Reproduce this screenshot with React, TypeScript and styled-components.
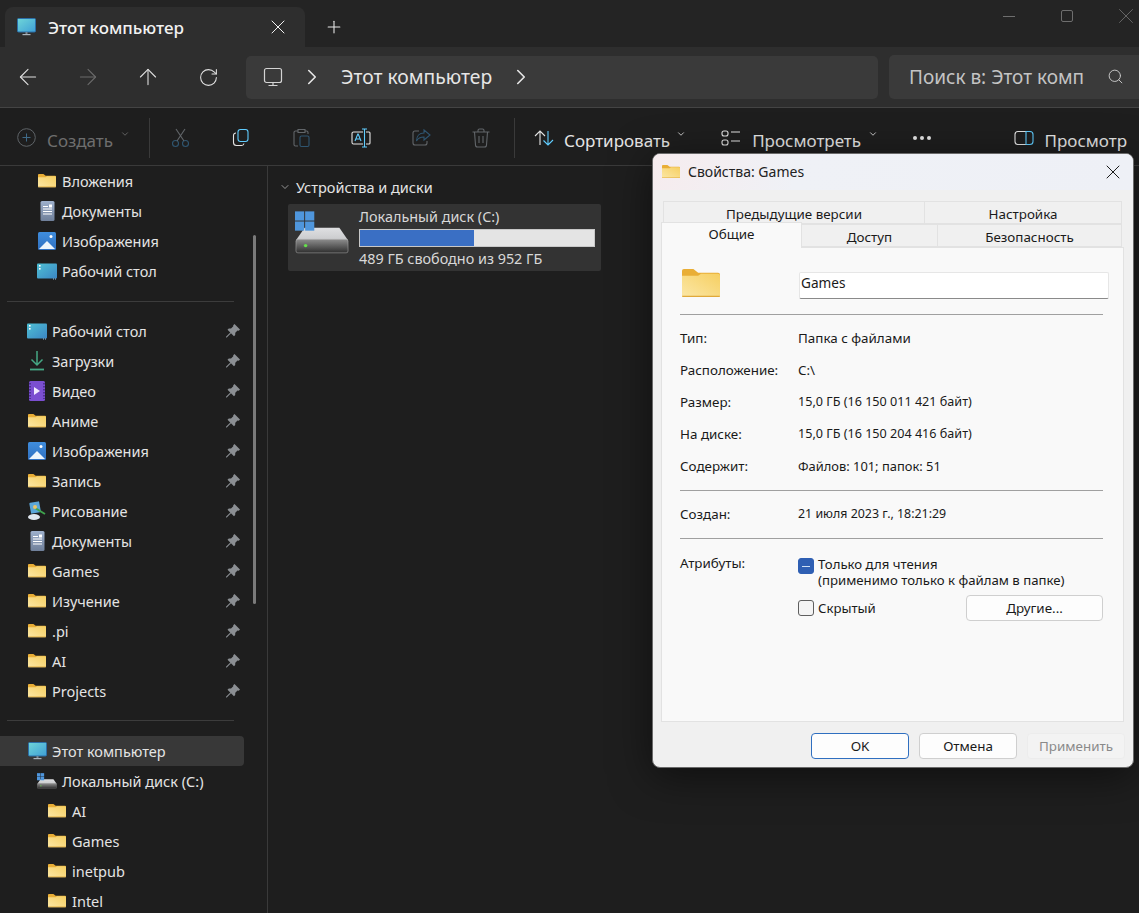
import * as React from 'react'
import styled, {createGlobalStyle} from 'styled-components'
import {ArrowLeft, ArrowRight, ArrowUp, ChevronDown, ChevronRight, Plus, RotateCw, Search, X} from 'lucide-react'

const UI_FONT = `"Noto Sans", "Open Sans", sans-serif`

const Global = createGlobalStyle`
  html, body { margin: 0; padding: 0; background: #1e1e1e; }
  body { font-family: ${UI_FONT}; overflow: hidden; }
  * { box-sizing: border-box; }
  svg { display: block; flex: none; }
`

const Page = styled.div`
  position: relative;
  width: 1139px;
  height: 913px;
  overflow: hidden;
  display: flex;
  flex-direction: column;
  background: #1e1e1e;
  color: #e8e8e8;
`

/* ---------- drawings ---------- */

const Folder: React.FC<{size?: number}> = ({size = 18}) => (
    <svg width={size} height={size * 0.74} viewBox="0 0 20 15.2" preserveAspectRatio="none">
        <defs>
            <linearGradient id="fg" x1="0" y1="1" x2="1" y2="0">
                <stop offset="0" stopColor="#fbe7a6" />
                <stop offset="1" stopColor="#f6cf62" />
            </linearGradient>
        </defs>
        <path d="M0 1a1 1 0 0 1 1-1h5l2.5 2H19a1 1 0 0 1 1 1v2H0z" fill="#e9ae36" />
        <path d="M0 3.6h8.5L10 2.6h9a1 1 0 0 1 1 1V14.2a1 1 0 0 1-1 1H1a1 1 0 0 1-1-1z" fill="url(#fg)" />
        <path d="M0 14.4h20a.8.8 0 0 1-.8.8H.8a.8.8 0 0 1-.8-.8z" fill="#e0a93a" />
    </svg>
)

const MonitorColor: React.FC = () => (
    <svg width="19" height="18" viewBox="0 0 19 18">
        <defs>
            <linearGradient id="mon" x1="0" y1="0" x2="1" y2="1">
                <stop offset="0" stopColor="#6fd6d8" />
                <stop offset="1" stopColor="#3f9fd6" />
            </linearGradient>
        </defs>
        <rect x="0.5" y="0.5" width="18" height="13.5" rx="1" fill="url(#mon)" stroke="#2b6ea8" />
        <rect x="8.5" y="14" width="2" height="2" fill="#7a8794" />
        <rect x="5.5" y="16" width="8" height="1.2" fill="#aab4bd" />
    </svg>
)

const Desktop: React.FC = () => (
    <svg width="20" height="17" viewBox="0 0 20 17">
        <defs>
            <linearGradient id="desk" x1="0" y1="0" x2="1" y2="1">
                <stop offset="0" stopColor="#4fc0d4" />
                <stop offset="1" stopColor="#3b86c4" />
            </linearGradient>
        </defs>
        <rect y="0.5" width="20" height="15" rx="1" fill="url(#desk)" />
        <rect x="2" y="2" width="1.6" height="1.6" fill="#fff" />
        <rect x="2" y="5" width="1.6" height="1.6" fill="#fff" />
        <rect x="16" y="15.5" width="1" height="1" fill="#9ec6e0" />
        <rect x="18" y="15.5" width="1" height="1" fill="#9ec6e0" />
    </svg>
)

const Doc: React.FC = () => (
    <svg width="15" height="20" viewBox="0 0 15 20">
        <defs>
            <linearGradient id="doc" x1="0" y1="0" x2="0" y2="1">
                <stop offset="0" stopColor="#9eb0cc" />
                <stop offset="1" stopColor="#6f7f99" />
            </linearGradient>
        </defs>
        <rect width="14" height="20" x="0.5" rx="1.5" fill="url(#doc)" />
        <path d="M3 5.5h5M3 8h9M3 10.5h9M3 13h9" stroke="#fff" strokeWidth="1" />
        <rect x="9" y="3.5" width="3" height="3" fill="#fff" />
    </svg>
)

const Picture: React.FC = () => (
    <svg width="18" height="18" viewBox="0 0 18 18">
        <defs>
            <linearGradient id="pic" x1="0" y1="0" x2="0" y2="1">
                <stop offset="0" stopColor="#3f8ddc" />
                <stop offset="1" stopColor="#2f6fc0" />
            </linearGradient>
        </defs>
        <rect width="18" height="18" rx="1.5" fill="url(#pic)" />
        <path d="M1 17 9 9l8 8z" fill="#eef5fb" />
        <circle cx="13" cy="4.5" r="1.5" fill="#fff" />
    </svg>
)

const Download: React.FC = () => (
    <svg width="16" height="20" viewBox="0 0 16 20" fill="none" stroke="#45a884" strokeWidth="1.5">
        <path d="M8 0v14M2.5 8.5 8 14l5.5-5.5" />
        <path d="M1 18.5h14" strokeWidth="1.8" />
    </svg>
)

const Video: React.FC = () => (
    <svg width="16" height="20" viewBox="0 0 16 20">
        <rect width="16" height="20" rx="1.5" fill="#7b4fd0" />
        <path d="M1 2v16M15 2v16" stroke="#3c2378" strokeWidth="1.4" strokeDasharray="1.5 1.5" />
        <path d="M5 6v8l6-4z" fill="#f2ecff" />
    </svg>
)

const Paint: React.FC = () => (
    <svg width="20" height="20" viewBox="0 0 20 20">
        <rect x="3" y="1" width="10" height="11" rx="1" fill="#5aa6d8" transform="rotate(-10 8 6)" />
        <ellipse cx="7" cy="16" rx="6" ry="3" fill="#dfe7ef" />
        <path d="M8 7l10 6" stroke="#3fa34d" strokeWidth="2" />
        <circle cx="8" cy="6" r="2" fill="#e9c46a" />
    </svg>
)

const Drive: React.FC<{width: number}> = ({width}) => (
    <svg width={width} height={width * 0.8} viewBox="0 0 56 44">
        <defs>
            <linearGradient id="dtop" x1="0" y1="0" x2="0" y2="1">
                <stop offset="0" stopColor="#dfe0e2" />
                <stop offset="1" stopColor="#c9cacc" />
            </linearGradient>
            <linearGradient id="dfront" x1="0" y1="0" x2="0" y2="1">
                <stop offset="0" stopColor="#8d8d8d" />
                <stop offset="1" stopColor="#2e2e2e" />
            </linearGradient>
        </defs>
        <path d="M10 17h36l9 13H1z" fill="url(#dtop)" />
        <rect x="1" y="29" width="54" height="14" rx="2" fill="url(#dfront)" stroke="#bbb" strokeWidth="0.5" />
        <circle cx="11" cy="35.5" r="1.8" fill="#64e04a" />
        <g fill="#4f96dc">
            <rect x="0" y="0" width="9.5" height="9.5" />
            <rect x="10.5" y="0" width="9.5" height="9.5" />
            <rect x="0" y="10.5" width="9.5" height="9.5" />
            <rect x="10.5" y="10.5" width="9.5" height="9.5" />
        </g>
    </svg>
)

const Pin: React.FC = () => (
    <svg width="14" height="14" viewBox="0 0 14 14">
        <path d="M8.5 0 14 5.500 12.800 6.700 11.500 6.500 9.300 8.800 9.200 11 8 12.300 5 9.300.8 13.500 0 13.500 0 12.800 4.300 8.500 1.500 5.800 2.800 4.600 5 4.500 7.300 2.300 7.200 1.200z" fill="#8b8f93" />
    </svg>
)

const ToolIcon: React.FC<{children: React.ReactNode}> = ({children}) => (
    <svg width="20" height="20" viewBox="0 0 20 20" fill="none" strokeWidth="1.1">
        {children}
    </svg>
)

/* ---------- title bar ---------- */

const TitleBar = styled.div`
  height: 47px;
  flex: none;
  display: flex;
  align-items: flex-end;
  padding-left: 5px;
  background: #242424;
`

const Tab = styled.div`
  width: 300px;
  height: 40px;
  display: flex;
  align-items: center;
  padding: 0 15px 0 12px;
  background: #2e2e2e;
  border-radius: 8px 8px 0 0;
  font-size: 17px;
  font-weight: 500;
  color: #f2f2f2;
`

const TabTitle = styled.span`
  flex: 1;
  margin-left: 12px;
`

const NewTab = styled.div`
  width: 108px;
  height: 40px;
  display: flex;
  align-items: center;
  padding-left: 19px;
  color: #e8e8e8;
`

const WindowControls = styled.div`
  margin-left: auto;
  align-self: flex-start;
  display: flex;
  align-items: center;
  gap: 40px;
  height: 32px;
  color: #6e6e6e;
`

const MinLine = styled.div`
  width: 12px;
  height: 1px;
  margin-right: 6px;
  background: #6e6e6e;
`

const MaxBox = styled.div`
  width: 12px;
  height: 12px;
  border: 1px solid #6e6e6e;
  border-radius: 2px;
`

/* ---------- address row ---------- */

const NavBar = styled.div`
  height: 61px;
  flex: none;
  display: flex;
  align-items: center;
  padding-left: 15px;
  background: #2e2e2e;
  border-bottom: 1px solid #444;
`

const NavButton = styled.div<{$off?: boolean}>`
  width: 26px;
  margin-right: 34px;
  display: flex;
  justify-content: center;
  color: ${({$off}) => ($off ? '#6b6b6b' : '#e0e0e0')};
`

const AddressBox = styled.div`
  width: 632px;
  height: 43px;
  margin-left: -9px;
  display: flex;
  align-items: center;
  padding: 0 0 1px 17px;
  gap: 16px;
  background: #3a3a3a;
  border-radius: 5px;
  font-size: 19.3px;
  color: #e6e6e6;
`

const SearchBox = styled.div`
  flex: 1;
  height: 44px;
  margin-left: 11px;
  display: flex;
  align-items: center;
  padding: 0 15px 1px 20px;
  background: #3a3a3a;
  border-radius: 5px 0 0 5px;
  font-size: 19px;
  color: #c4c4c4;
`

const SearchText = styled.span`
  width: 176px;
  overflow: hidden;
  white-space: nowrap;
  margin-right: auto;
`

/* ---------- command bar ---------- */

const CommandBar = styled.div`
  height: 58px;
  flex: none;
  display: flex;
  align-items: center;
  padding: 2px 0 0 17px;
  background: #1e1e1e;
  border-bottom: 1px solid #3a3a3a;
  font-size: 17px;
`

const Command = styled.div<{$off?: boolean; $gap?: number; $left?: number}>`
  display: flex;
  align-items: center;
  gap: ${({$gap}) => $gap ?? 10}px;
  margin-left: ${({$left}) => $left ?? 0}px;
  white-space: nowrap;
  color: ${({$off}) => ($off ? '#6e6e6e' : '#e4e4e4')};
`

const RightCommand = styled(Command)`
  margin-left: auto;
  padding-right: 12px;
`

const CommandLabel = styled.span`
  position: relative;
  top: 3px;
`

const SmallChevron = styled(ChevronDown)`
  margin: -8px 0 0 -4px;
`

const CommandDivider = styled.div<{$left: number; $right: number}>`
  width: 1px;
  height: 40px;
  margin: 0 ${({$right}) => $right}px 0 ${({$left}) => $left}px;
  background: #3a3a3a;
`

const IconSlot = styled.div`
  width: 60px;
  display: flex;
`

const Dots = styled.div`
  display: flex;
  gap: 3px;
  margin: 0 0 0 35px;
`

const Dot = styled.i`
  width: 4px;
  height: 4px;
  border-radius: 50%;
  background: #e4e4e4;
`

/* ---------- sidebar ---------- */

const Body = styled.div`
  flex: 1;
  display: flex;
  min-height: 0;
`

const Sidebar = styled.div`
  position: relative;
  width: 268px;
  flex: none;
  overflow: hidden;
  border-right: 1px solid #3a3a3a;
`

const ScrollThumb = styled.div`
  position: absolute;
  left: 253px;
  top: 69px;
  width: 3px;
  height: 369px;
  border-radius: 2px;
  background: #7a7a7a;
`

const NavRow = styled.div<{$indent: number; $active?: boolean}>`
  width: 244px;
  height: 30px;
  display: flex;
  align-items: center;
  padding-left: ${({$indent}) => $indent}px;
  padding-right: 4px;
  border-radius: 0 4px 4px 0;
  background: ${({$active}) => ($active ? '#383838' : 'transparent')};
  font-size: 14.5px;
  color: #e4e4e4;
`

const NavIcon = styled.span`
  width: 20px;
  height: 20px;
  margin-right: 5px;
  flex: none;
  display: flex;
  align-items: center;
  justify-content: center;
`

const NavLabel = styled.span`
  flex: 1;
`

const SideRule = styled.div<{$top: number; $bottom: number}>`
  width: 227px;
  height: 1px;
  margin: ${({$top}) => $top}px 0 ${({$bottom}) => $bottom}px 7px;
  background: #3c3c3c;
`

/* ---------- content ---------- */

const Content = styled.div`
  flex: 1;
  padding: 8px 0 0 11px;
`

const GroupHead = styled.div`
  display: flex;
  align-items: center;
  gap: 5px;
  height: 26px;
  font-size: 14.5px;
  color: #e4e4e4;
`

const DriveTile = styled.div`
  width: 313px;
  height: 67px;
  margin: 4px 0 0 9px;
  padding: 7px 6px 0 7px;
  display: flex;
  gap: 10px;
  background: #333;
  border-radius: 2px;
`

const DriveInfo = styled.div`
  flex: 1;
  margin-top: -4px;
  font-size: 14.4px;
  line-height: 20px;
  color: #d8d8d8;
`

const DriveMeter = styled.div`
  height: 18px;
  margin: 2px 0;
  background: #e4e4e4;
  border: 1px solid #c8c8c8;
`

const DriveFill = styled.div`
  height: 100%;
  background: #3a6fc4;
`

/* ---------- properties dialog ---------- */

const Dialog = styled.div`
  position: absolute;
  left: 652px;
  top: 153px;
  width: 482px;
  height: 615px;
  display: flex;
  flex-direction: column;
  background: #f0f0f0;
  border: 1px solid #6a6a6a;
  border-radius: 8px;
  overflow: hidden;
  color: #1a1a1a;
  font-size: 13.4px;
  box-shadow: 0 8px 40px rgba(0, 0, 0, 0.5);
`

const DialogTitle = styled.div`
  height: 36px;
  flex: none;
  display: flex;
  align-items: center;
  padding: 0 8px 1px 9px;
  gap: 8px;
  font-size: 14px;
  background: linear-gradient(100deg, #f6ecee 0, #eff1f6 30%, #eef0f6 100%);
`

const DialogTitleText = styled.span`
  flex: 1;
  color: #222;
`

const TabArea = styled.div`
  margin: 11px 9px 0 8px;
  display: flex;
  flex-direction: column;
`

const TabLine = styled.div<{$inset: number}>`
  display: flex;
  height: 23px;
  padding: 0 2px 0 ${({$inset}) => $inset}px;
  font-size: 13.4px;
`

const SheetTab = styled.div<{$w?: number; $on?: boolean}>`
  ${({$w}) => ($w ? `width: ${$w}px;` : 'flex: 1;')}
  display: flex;
  align-items: center;
  justify-content: center;
  padding-top: 2px;
  background: ${({$on}) => ($on ? '#f9f9f9' : '#f0f0f0')};
  border: 1px solid #e2e2e2;
  border-bottom: ${({$on}) => ($on ? 'none' : '1px solid #e2e2e2')};
  margin-left: -1px;
  position: relative;
  ${({$on}) => ($on ? 'height: 26px; margin-top: -2px; z-index: 1; margin-left: 0; padding: 0 0 3px;' : '')}
`

const Sheet = styled.div`
  height: 475px;
  padding: 20px 20px 0 18px;
  background: #f9f9f9;
  border: 1px solid #e2e2e2;
`

const NameRow = styled.div`
  display: grid;
  grid-template-columns: 119px 310px;
  align-items: center;
  height: 34px;
`

const NameFolder = styled.div`
  margin: -4px 0 0 2px;
`

const NameInput = styled.div`
  height: 27px;
  padding: 0 1px;
  background: #fff;
  border: 1px solid #e6e6e6;
  border-bottom: 1px solid #8a8a8a;
  font-size: 13.6px;
  border-radius: 2px;
`

const Rule = styled.div<{$top: number; $bottom: number}>`
  height: 1px;
  background: #a0a0a0;
  margin: ${({$top}) => $top}px 0 ${({$bottom}) => $bottom}px;
`

const InfoRow = styled.div`
  display: grid;
  grid-template-columns: 118px 1fr;
  height: 32px;
  line-height: 16px;
`

const InfoValue = styled.span<{$size: number}>`
  font-size: ${({$size}) => $size}px;
`

const CheckRow = styled.div<{$center?: boolean}>`
  display: flex;
  align-items: ${({$center}) => ($center ? 'center' : 'flex-start')};
  gap: 4px;
`

const CheckBox = styled.div<{$on?: boolean}>`
  width: 16px;
  height: 16px;
  flex: none;
  display: flex;
  align-items: center;
  justify-content: center;
  margin-top: ${({$on}) => ($on ? 2 : 0)}px;
  border-radius: 3px;
  background: ${({$on}) => ($on ? '#2f5fb3' : '#f4f4f4')};
  border: 1px solid ${({$on}) => ($on ? '#2f5fb3' : '#5f5f5f')};
`

const CheckDash = styled.i`
  width: 8px;
  height: 1px;
  background: #cfe0f5;
`

const AttrGrid = styled.div`
  display: grid;
  grid-template-columns: 118px 1fr;
`

const AttrBox = styled.div`
  display: flex;
  flex-direction: column;
  margin-top: 2px;
`

const AttrBottom = styled.div`
  display: flex;
  align-items: center;
  justify-content: space-between;
  margin-top: 7px;
`

const AttrText = styled.div`
  font-size: 13.2px;
  line-height: 16px;
  white-space: nowrap;
`

const DialogButton = styled.div<{$primary?: boolean; $off?: boolean; $w?: number}>`
  width: ${({$w}) => $w ?? 98}px;
  height: 26px;
  display: flex;
  align-items: center;
  justify-content: center;
  border-radius: 4px;
  background: ${({$off}) => ($off ? '#f3f3f3' : '#fdfdfd')};
  color: ${({$off}) => ($off ? '#8a8a8a' : '#1a1a1a')};
  border: 1px solid ${({$primary, $off}) => ($primary ? '#2f6fc0' : $off ? '#ececec' : '#cfcfcf')};
`

const DialogFooter = styled.div`
  flex: 1;
  display: flex;
  justify-content: flex-end;
  align-items: flex-start;
  gap: 10px;
  padding: 11px 8px 0 0;
`

const QUICK = [
    {label: 'Вложения', icon: <Folder />},
    {label: 'Документы', icon: <Doc />},
    {label: 'Изображения', icon: <Picture />},
    {label: 'Рабочий стол', icon: <Desktop />},
]

const PINNED = [
    {label: 'Рабочий стол', icon: <Desktop />},
    {label: 'Загрузки', icon: <Download />},
    {label: 'Видео', icon: <Video />},
    {label: 'Аниме', icon: <Folder />},
    {label: 'Изображения', icon: <Picture />},
    {label: 'Запись', icon: <Folder />},
    {label: 'Рисование', icon: <Paint />},
    {label: 'Документы', icon: <Doc />},
    {label: 'Games', icon: <Folder />},
    {label: 'Изучение', icon: <Folder />},
    {label: '.pi', icon: <Folder />},
    {label: 'AI', icon: <Folder />},
    {label: 'Projects', icon: <Folder />},
]

const INFO_TOP: [string, string, number][] = [
    ['Тип:', 'Папка с файлами', 13.4],
    ['Расположение:', 'C:\\', 13.4],
    ['Размер:', '15,0 ГБ (16 150 011 421 байт)', 12.6],
    ['На диске:', '15,0 ГБ (16 150 204 416 байт)', 12.6],
    ['Содержит:', 'Файлов: 101; папок: 51', 12.9],
]

const App: React.FC = () => {
    return (
        <Page>
            <Global />
            <TitleBar>
                <Tab>
                    <MonitorColor />
                    <TabTitle>Этот компьютер</TabTitle>
                    <X size={24} strokeWidth={1} />
                </Tab>
                <NewTab>
                    <Plus size={20} strokeWidth={1.3} />
                </NewTab>
                <WindowControls>
                    <MinLine />
                    <MaxBox />
                    <X size={26} strokeWidth={0.8} />
                </WindowControls>
            </TitleBar>

            <NavBar>
                <NavButton><ArrowLeft size={26} strokeWidth={1} /></NavButton>
                <NavButton $off><ArrowRight size={26} strokeWidth={1} /></NavButton>
                <NavButton><ArrowUp size={26} strokeWidth={1} /></NavButton>
                <NavButton><RotateCw size={21} strokeWidth={1.2} /></NavButton>
                <AddressBox>
                    <svg width="20" height="20" viewBox="0 0 20 20" fill="none" stroke="#d4d4d4" strokeWidth="1.2">
                        <rect x="1.5" y="1.5" width="17" height="14" rx="2" />
                        <path d="M10 15.5v2.5M5.5 18.500h9" />
                    </svg>
                    <ChevronRight size={26} strokeWidth={1.5} />
                    <span>Этот компьютер</span>
                    <ChevronRight size={26} strokeWidth={1.5} />
                </AddressBox>
                <SearchBox>
                    <SearchText>Поиск в: Этот комп</SearchText>
                    <Search size={17} strokeWidth={1.4} />
                </SearchBox>
            </NavBar>

            <CommandBar>
                <Command $off $gap={11}>
                    <svg width="19" height="19" viewBox="0 0 19 19" fill="none" stroke="#5f6468" strokeWidth="1">
                        <circle cx="9.5" cy="9.5" r="8.8" />
                        <path d="M9.5 5.5v8M5.5 9.5h8" stroke="#3f6a88" />
                    </svg>
                    <CommandLabel>Создать</CommandLabel>
                    <SmallChevron size={10} />
                </Command>
                <CommandDivider $left={19} $right={21} />
                <IconSlot>
                    <ToolIcon>
                        <circle cx="4.5" cy="15.5" r="3" stroke="#2f5570" />
                        <circle cx="14.5" cy="15.5" r="3" stroke="#2f5570" />
                        <path d="M6 13 14 1M13 13 5 1" stroke="#62666a" />
                    </ToolIcon>
                </IconSlot>
                <IconSlot>
                    <ToolIcon>
                        <rect x="7" y="1.5" width="10" height="12" rx="2.5" stroke="#60cdff" />
                        <path d="M5 5A2.5 2.5 0 0 0 2.5 7.5v7A3 3 0 0 0 5.5 17.5h5A2.5 2.5 0 0 0 13 15.5" stroke="#e4e4e4" />
                    </ToolIcon>
                </IconSlot>
                <IconSlot>
                    <ToolIcon>
                        <path d="M7 3H4.500A1.500 1.500 0 0 0 3 4.500v12A1.500 1.500 0 0 0 4.500 18H7M14 3h1.500A1.500 1.500 0 0 1 17 4.500V6M7 1.500h7v3H7z" stroke="#62666a" />
                        <rect x="9" y="8" width="9" height="10.5" rx="1.5" stroke="#2f5570" />
                    </ToolIcon>
                </IconSlot>
                <IconSlot>
                    <ToolIcon>
                        <path d="M12 4H2.500A1.500 1.500 0 0 0 1 5.500v9A1.500 1.500 0 0 0 2.500 16H12M15 4h3a1 1 0 0 1 1 1v10a1 1 0 0 1-1 1h-3" stroke="#e4e4e4" />
                        <path d="M11 1h5M11 19h5M13.500 1v18M4 13l2.800-7h.4L10 13M5 11h4" stroke="#60cdff" />
                    </ToolIcon>
                </IconSlot>
                <IconSlot>
                    <ToolIcon>
                        <path d="M8 3H4a2 2 0 0 0-2 2v10a2 2 0 0 0 2 2h10a2 2 0 0 0 2-2v-2" stroke="#62666a" />
                        <path d="M13 2l6 5-6 5V9c-4 0-6 1-7.500 4 0-5 3-8 7.500-8z" stroke="#2f5570" />
                    </ToolIcon>
                </IconSlot>
                <IconSlot>
                    <ToolIcon>
                        <path d="M1.500 4h17M7 4V2.500A1.500 1.500 0 0 1 8.500 1h3A1.500 1.500 0 0 1 13 2.500V4M3.500 4l1 13a2 2 0 0 0 2 2h7a2 2 0 0 0 2-2l1-13M8 8v7M12 8v7" stroke="#62666a" />
                    </ToolIcon>
                </IconSlot>
                <CommandDivider $left={-17} $right={19} />
                <Command>
                    <ToolIcon>
                        <path d="M6 17V3M1 8l5-5 5 5" stroke="#e4e4e4" />
                        <path d="M14 3v14M9.500 12.500 14 17l5-5" stroke="#60cdff" />
                    </ToolIcon>
                    <CommandLabel>Сортировать</CommandLabel>
                    <SmallChevron size={10} />
                </Command>
                <Command $left={35} $gap={11}>
                    <ToolIcon>
                        <rect x="1" y="3" width="6" height="5" rx="2" stroke="#e4e4e4" />
                        <rect x="1" y="12" width="6" height="5" rx="2" stroke="#e4e4e4" />
                        <path d="M10 4h9M10 13h9" stroke="#e4e4e4" />
                    </ToolIcon>
                    <CommandLabel>Просмотреть</CommandLabel>
                    <SmallChevron size={10} />
                </Command>
                <Dots><Dot /><Dot /><Dot /></Dots>
                <RightCommand>
                    <ToolIcon>
                        <path d="M12 3.500H4a3 3 0 0 0-3 3v7a3 3 0 0 0 3 3h8" stroke="#e4e4e4" />
                        <path d="M12 3.500h4a3 3 0 0 1 3 3v7a3 3 0 0 1-3 3h-4z" stroke="#60cdff" />
                    </ToolIcon>
                    <CommandLabel>Просмотр</CommandLabel>
                </RightCommand>
            </CommandBar>

            <Body>
                <Sidebar>
                    <ScrollThumb />
                    {QUICK.map(item => (
                        <NavRow key={item.label} $indent={37}>
                            <NavIcon>{item.icon}</NavIcon>
                            <NavLabel>{item.label}</NavLabel>
                        </NavRow>
                    ))}
                    <SideRule $top={15} $bottom={14} />
                    {PINNED.map((item, idx) => (
                        <NavRow key={`${item.label}_${idx}`} $indent={27}>
                            <NavIcon>{item.icon}</NavIcon>
                            <NavLabel>{item.label}</NavLabel>
                            <Pin />
                        </NavRow>
                    ))}
                    <SideRule $top={14} $bottom={15} />
                    <NavRow $indent={27} $active>
                        <NavIcon><MonitorColor /></NavIcon>
                        <NavLabel>Этот компьютер</NavLabel>
                    </NavRow>
                    <NavRow $indent={37}>
                        <NavIcon><Drive width={20} /></NavIcon>
                        <NavLabel>Локальный диск (C:)</NavLabel>
                    </NavRow>
                    {['AI', 'Games', 'inetpub', 'Intel'].map(name => (
                        <NavRow key={name} $indent={47}>
                            <NavIcon><Folder /></NavIcon>
                            <NavLabel>{name}</NavLabel>
                        </NavRow>
                    ))}
                </Sidebar>

                <Content>
                    <GroupHead>
                        <ChevronDown size={12} strokeWidth={1.2} />
                        Устройства и диски
                    </GroupHead>
                    <DriveTile>
                        <Drive width={54} />
                        <DriveInfo>
                            Локальный диск (C:)
                            <DriveMeter>
                                <DriveFill style={{width: `${(463 / 952) * 100}%`}} />
                            </DriveMeter>
                            489 ГБ свободно из 952 ГБ
                        </DriveInfo>
                    </DriveTile>
                </Content>
            </Body>

            <Dialog>
                <DialogTitle>
                    <Folder size={18} />
                    <DialogTitleText>Свойства: Games</DialogTitleText>
                    <X size={24} strokeWidth={1} />
                </DialogTitle>
                <TabArea>
                    <TabLine $inset={3}>
                        <SheetTab $w={262}>Предыдущие версии</SheetTab>
                        <SheetTab>Настройка</SheetTab>
                    </TabLine>
                    <TabLine $inset={0}>
                        <SheetTab $w={141} $on>Общие</SheetTab>
                        <SheetTab $w={137}>Доступ</SheetTab>
                        <SheetTab>Безопасность</SheetTab>
                    </TabLine>
                    <Sheet>
                        <NameRow>
                            <NameFolder><Folder size={38} /></NameFolder>
                            <NameInput>Games</NameInput>
                        </NameRow>
                        <Rule $top={12} $bottom={15} />
                        {INFO_TOP.map(([label, value, size]) => (
                            <InfoRow key={label}>
                                <span>{label}</span>
                                <InfoValue $size={size}>{value}</InfoValue>
                            </InfoRow>
                        ))}
                        <Rule $top={0} $bottom={15} />
                        <InfoRow>
                            <span>Создан:</span>
                            <InfoValue $size={12.4}>21 июля 2023 г., 18:21:29</InfoValue>
                        </InfoRow>
                        <Rule $top={0} $bottom={15} />
                        <AttrGrid>
                            <span>Атрибуты:</span>
                            <AttrBox>
                                <CheckRow>
                                    <CheckBox $on><CheckDash /></CheckBox>
                                    <AttrText>
                                        Только для чтения
                                        <br />
                                        (применимо только к файлам в папке)
                                    </AttrText>
                                </CheckRow>
                                <AttrBottom>
                                    <CheckRow $center>
                                        <CheckBox />
                                        <AttrText>Скрытый</AttrText>
                                    </CheckRow>
                                    <DialogButton $w={137}>Другие...</DialogButton>
                                </AttrBottom>
                            </AttrBox>
                        </AttrGrid>
                    </Sheet>
                </TabArea>
                <DialogFooter>
                    <DialogButton $primary>OK</DialogButton>
                    <DialogButton>Отмена</DialogButton>
                    <DialogButton $off>Применить</DialogButton>
                </DialogFooter>
            </Dialog>
        </Page>
    )
}

export default App
